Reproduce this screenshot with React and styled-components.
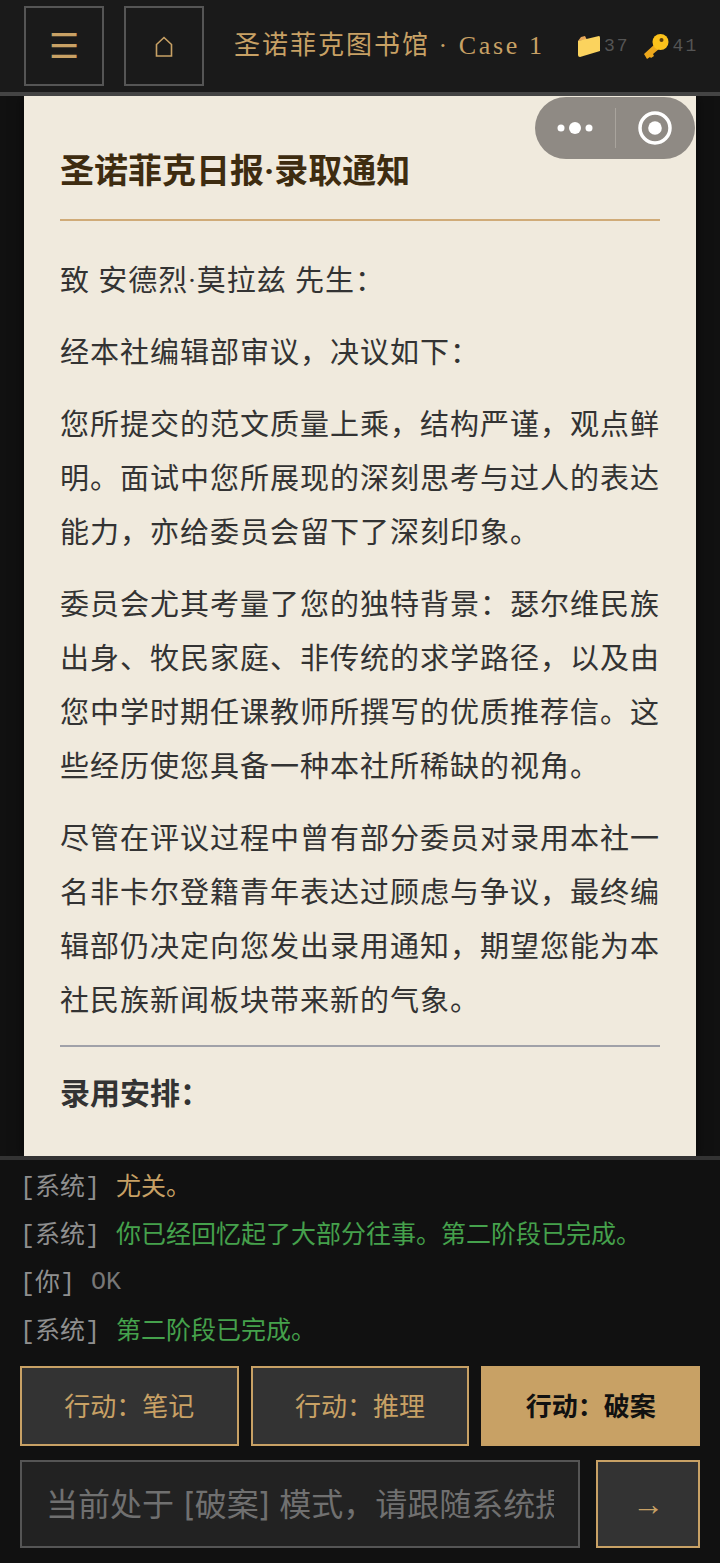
import styled, { createGlobalStyle } from "styled-components";

const GlobalStyle = createGlobalStyle`
  html, body {
    margin: 0;
    padding: 0;
    background: #111;
  }
  * {
    box-sizing: border-box;
  }
`;

const SANS = `Roboto, "Noto Sans CJK SC", sans-serif`;
const SERIF = `"Liberation Serif", "Noto Sans CJK SC", serif`;
const MONO = `"Liberation Mono", "Noto Sans CJK SC", monospace`;
const GOLD = "#c8a165";
const GREEN = "#45a14c";

const Page = styled.div`
  width: 720px;
  height: 1563px;
  display: flex;
  flex-direction: column;
  background: #111;
  overflow: hidden;
  position: relative;
`;

const Header = styled.header`
  height: 96px;
  flex: none;
  display: flex;
  align-items: flex-start;
  padding: 6px 0 0 24px;
  background: #1a1a1a;
  border-bottom: 4px solid #444;
`;

const IconButton = styled.button`
  width: 80px;
  height: 80px;
  margin-right: 20px;
  padding: 0;
  display: flex;
  align-items: center;
  justify-content: center;
  background: transparent;
  border: 2px solid #555;
  color: ${GOLD};
  font-family: "DejaVu Sans", sans-serif;
  font-size: 34px;
  line-height: 1;
`;

const HeaderTitle = styled.h1`
  margin: 0 0 0 10px;
  width: 344px;
  flex: none;
  font-family: ${SERIF};
  font-weight: 400;
  font-size: 26px;
  letter-spacing: 2px;
  line-height: 80px;
  color: ${GOLD};
  white-space: nowrap;
`;

const CaseTag = styled.span`
  letter-spacing: 2.6px;
`;

const Stats = styled.div`
  display: flex;
  align-items: center;
  height: 80px;
  gap: 14px;
`;

const Stat = styled.div`
  display: flex;
  align-items: center;
  gap: 4px;
  font-family: ${MONO};
  font-size: 18px;
  letter-spacing: 2px;
  color: #555;
`;

const Reader = styled.main`
  flex: 1;
  min-height: 0;
  padding: 0 24px;
  overflow: hidden;
`;

const Paper = styled.article`
  height: 100%;
  padding: 52px 36px 0;
  background: #f0eadd;
  color: #333;
  font-family: ${SANS};
  overflow: hidden;
  box-shadow: 0 0 12px rgba(0, 0, 0, 0.6);
`;

const PaperTitle = styled.h2`
  margin: 0 0 33px;
  padding-bottom: 24px;
  border-bottom: 2px solid #d0ab78;
  font-size: 34px;
  line-height: 47px;
  font-weight: 700;
  color: #3e2c10;
`;

const Para = styled.p`
  margin: 0 0 18px;
  font-size: 29px;
  letter-spacing: 1px;
  line-height: 54px;
  text-align: justify;
`;

const Rule = styled.hr`
  margin: -1px 0 18px;
  border: none;
  border-top: 2px solid #a0a1a8;
`;

const Strong = styled.p`
  margin: 0;
  font-size: 30px;
  line-height: 58px;
  font-weight: 700;
`;

const Capsule = styled.div`
  position: absolute;
  left: 535px;
  top: 97px;
  width: 160px;
  height: 62px;
  display: flex;
  align-items: center;
  border-radius: 31px;
  background: #8f8a84;
`;

const CapsuleSide = styled.div`
  width: 80px;
  display: flex;
  justify-content: center;
  align-items: center;
`;

const CapsuleDivider = styled.div`
  width: 1px;
  height: 40px;
  background: #a9a49d;
`;

const Log = styled.section`
  flex: none;
  height: 210px;
  padding: 0 20px;
  background: #111;
  border-top: 4px solid #333;
  font-family: ${MONO};
`;

const LogRow = styled.div`
  display: flex;
  align-items: center;
  height: 48px;
  font-size: 25px;
`;

const Who = styled.span`
  color: #8f8f8f;
  margin-right: 16px;
  white-space: pre;
`;

const Message = styled.span`
  color: ${(p) => p.$color};
  padding-top: ${(p) => (p.$latin ? "4px" : "0")};
`;

const Actions = styled.div`
  flex: none;
  display: grid;
  grid-template-columns: repeat(3, 1fr);
  gap: 12px;
  padding: 0 20px;
  height: 94px;
`;

const ActionButton = styled.button`
  height: 80px;
  padding: 0 0 4px;
  border: 2px solid ${GOLD};
  background: ${(p) => (p.$active ? GOLD : "#333")};
  color: ${(p) => (p.$active ? "#111" : GOLD)};
  font-family: ${SANS};
  font-size: 26px;
  font-weight: ${(p) => (p.$active ? 700 : 400)};
`;

const InputRow = styled.form`
  flex: none;
  display: flex;
  gap: 16px;
  padding: 0 20px 15px;
`;

const TextInput = styled.input`
  flex: 1;
  min-width: 0;
  height: 88px;
  padding: 0 24px;
  background: #222;
  border: 2px solid #555;
  outline: none;
  color: #ddd;
  font-family: Inter, "Noto Sans CJK SC", sans-serif;
  font-size: 32px;
  &::placeholder {
    color: #707070;
    opacity: 1;
  }
`;

const SendButton = styled.button`
  width: 104px;
  height: 88px;
  padding: 0;
  background: #333;
  border: 2px solid ${GOLD};
  color: ${GOLD};
  font-family: "Liberation Sans", sans-serif;
  font-size: 32px;
`;

const HomeIcon = () => (
  <svg width="18" height="21" viewBox="0 0 18 21">
    <path d="M1.5 20 L16.5 20 L16.5 8.5 L9 1.5 L1.5 8.5 Z" fill="none" stroke={GOLD} strokeWidth="1.6" />
  </svg>
);

const FolderIcon = () => (
  <svg width="22" height="21" viewBox="0 0 22 21">
    <path d="M0 5 L3 1 L7 0 L9 4 Z" fill="#e8a85a" />
    <path d="M0 5 L21 0 Q22 0 22 2 L22 15 L2 21 Q0 21 0 19 Z" fill="#fbd35e" />
  </svg>
);

const KeyIcon = () => (
  <svg width="25" height="25" viewBox="0 0 25 25">
    <path d="M11 10 L0 20 L3 25 L6 23 L7 24 L10 22 L9 20 L15 15 Z" fill="#eca71c" />
    <circle cx="16.5" cy="8" r="8" fill="#fcc21b" />
    <circle cx="17.5" cy="6" r="2" fill="#5b3d0a" />
  </svg>
);

const CloseDot = () => (
  <svg width="36" height="36" viewBox="0 0 36 36">
    <circle cx="18" cy="18" r="15" fill="none" stroke="#fff" strokeWidth="3.5" />
    <circle cx="18" cy="18" r="6.8" fill="#fff" />
  </svg>
);

const MoreDots = () => (
  <svg width="36" height="14" viewBox="0 0 36 14">
    <circle cx="4" cy="7" r="3.5" fill="#fff" />
    <circle cx="18" cy="7" r="6" fill="#fff" />
    <circle cx="32" cy="7" r="3.5" fill="#fff" />
  </svg>
);

const logs = [
  { who: "[系统]", text: "尤关。", color: GOLD },
  { who: "[系统]", text: "你已经回忆起了大部分往事。第二阶段已完成。", color: GREEN },
  { who: "[你]", text: "OK", color: "#777", latin: true },
  { who: "[系统]", text: "第二阶段已完成。", color: GREEN },
];

const App = () => {
  return (
    <Page>
      <GlobalStyle />
      <Header>
        <IconButton>☰</IconButton>
        <IconButton>
          <HomeIcon />
        </IconButton>
        <HeaderTitle>
          圣诺菲克图书馆 <CaseTag>· Case 1</CaseTag>
        </HeaderTitle>
        <Stats>
          <Stat>
            <FolderIcon />
            37
          </Stat>
          <Stat>
            <KeyIcon />
            41
          </Stat>
        </Stats>
      </Header>

      <Reader>
        <Paper>
          <PaperTitle>圣诺菲克日报·录取通知</PaperTitle>
          <Para>致 安德烈·莫拉兹 先生：</Para>
          <Para>经本社编辑部审议，决议如下：</Para>
          <Para>
            您所提交的范文质量上乘，结构严谨，观点鲜明。面试中您所展现的深刻思考与过人的表达能力，亦给委员会留下了深刻印象。
          </Para>
          <Para>
            委员会尤其考量了您的独特背景：瑟尔维民族出身、牧民家庭、非传统的求学路径，以及由您中学时期任课教师所撰写的优质推荐信。这些经历使您具备一种本社所稀缺的视角。
          </Para>
          <Para>
            尽管在评议过程中曾有部分委员对录用本社一名非卡尔登籍青年表达过顾虑与争议，最终编辑部仍决定向您发出录用通知，期望您能为本社民族新闻板块带来新的气象。
          </Para>
          <Rule />
          <Strong>录用安排：</Strong>
        </Paper>
      </Reader>

      <Capsule>
        <CapsuleSide>
          <MoreDots />
        </CapsuleSide>
        <CapsuleDivider />
        <CapsuleSide>
          <CloseDot />
        </CapsuleSide>
      </Capsule>

      <Log>
        {logs.map((row, i) => (
          <LogRow key={i}>
            <Who>{row.who}</Who>
            <Message $color={row.color} $latin={row.latin}>
              {row.text}
            </Message>
          </LogRow>
        ))}
      </Log>

      <Actions>
        <ActionButton>行动：笔记</ActionButton>
        <ActionButton>行动：推理</ActionButton>
        <ActionButton $active>行动：破案</ActionButton>
      </Actions>

      <InputRow>
        <TextInput placeholder="当前处于 [破案] 模式，请跟随系统提示操作" />
        <SendButton type="button">→</SendButton>
      </InputRow>
    </Page>
  );
};

export default App;
